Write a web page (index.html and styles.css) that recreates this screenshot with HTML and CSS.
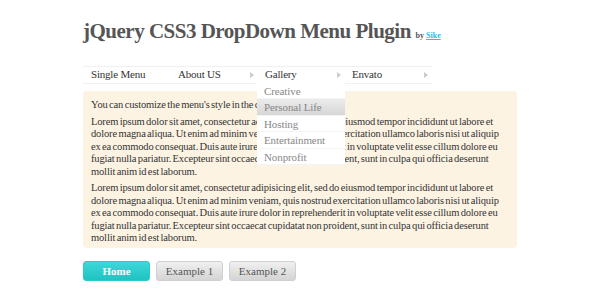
FILE: index.html
```html
<!DOCTYPE html>
<html lang="en">
<head>
  <meta charset="UTF-8" />
  <title>jQuery CSS3 DropDown Menu Plugin</title>
  <link rel="stylesheet" href="styles.css">
</head>
<body>
  <div class="container">
    <h1 class="title">jQuery CSS3 DropDown Menu Plugin <small>by <a href="#">Sike</a></small></h1>

    <ul class="menu">
      <li class="menu-item"><a href="#">Single Menu</a></li>
      <li class="menu-item has-sub"><a href="#">About US</a></li>
      <li class="menu-item has-sub open">
        <a href="#">Gallery</a>
        <ul class="submenu">
          <li><a href="#">Creative</a></li>
          <li class="hover"><a href="#">Personal Life</a></li>
          <li><a href="#">Hosting</a></li>
          <li><a href="#">Entertainment</a></li>
          <li><a href="#">Nonprofit</a></li>
        </ul>
      </li>
      <li class="menu-item has-sub"><a href="#">Envato</a></li>
    </ul>

    <div class="content">
      <p>You can customize the menu's style in the css file.</p>
      <p>Lorem ipsum dolor sit amet, consectetur adipisicing elit, sed do eiusmod tempor incididunt ut labore et dolore magna aliqua. Ut enim ad minim veniam, quis nostrud exercitation ullamco laboris nisi ut aliquip ex ea commodo consequat. Duis aute irure dolor in reprehenderit in voluptate velit esse cillum dolore eu fugiat nulla pariatur. Excepteur sint occaecat cupidatat non proident, sunt in culpa qui officia deserunt mollit anim id est laborum.</p>
      <p>Lorem ipsum dolor sit amet, consectetur adipisicing elit, sed do eiusmod tempor incididunt ut labore et dolore magna aliqua. Ut enim ad minim veniam, quis nostrud exercitation ullamco laboris nisi ut aliquip ex ea commodo consequat. Duis aute irure dolor in reprehenderit in voluptate velit esse cillum dolore eu fugiat nulla pariatur. Excepteur sint occaecat cupidatat non proident, sunt in culpa qui officia deserunt mollit anim id est laborum.</p>
    </div>

    <div class="buttons">
      <a href="#" class="btn btn-active">Home</a>
      <a href="#" class="btn">Example 1</a>
      <a href="#" class="btn">Example 2</a>
    </div>
  </div>
</body>
</html>
```

FILE: styles.css
```css
* {
  box-sizing: border-box;
  margin: 0;
  padding: 0;
}

body {
  font-family: 'Liberation Serif', 'Times New Roman', serif;
  background: #fff;
  color: #333;
}

.container {
  padding: 17px 0 0 83px;
  width: 517px;
}

.title {
  font-size: 21px;
  letter-spacing: -0.5px;
  line-height: 28px;
  color: #555;
  font-weight: bold;
}

.title small {
  font-size: 8px;
  letter-spacing: 0;
  color: #555;
}

.title small a {
  color: #3ab8e0;
}

/* menu bar */
.menu {
  list-style: none;
  display: flex;
  margin-top: 16px;
  border-top: 1px solid #f0f0f0;
  border-bottom: 1px solid #f0f0f0;
  width: 350px;
  position: relative;
  z-index: 2;
}

.menu-item {
  position: relative;
  width: 87px;
  height: 16px;
}

.menu-item > a {
  display: block;
  padding-left: 8px;
  font-size: 11px;
  letter-spacing: -0.2px;
  line-height: 15px;
  color: #333;
  text-decoration: none;
}

.has-sub::after {
  content: '';
  position: absolute;
  right: 3px;
  top: 5px;
  border-left: 4px solid #ccc;
  border-top: 3px solid transparent;
  border-bottom: 3px solid transparent;
}

.submenu {
  list-style: none;
  position: absolute;
  top: 16px;
  left: 0;
  width: 88px;
  background: #fff;
}

.submenu li {
  height: 16.4px;
  border-bottom: 1px solid #f4f4f4;
}

.submenu li a {
  display: block;
  padding-left: 7px;
  font-size: 11px;
  letter-spacing: -0.1px;
  line-height: 16px;
  color: #888;
  text-decoration: none;
}

.submenu li.hover {
  background: linear-gradient(#ececec, #d6d6d6);
}

/* content box */
.content {
  margin-top: 7px;
  background: #fdf3e3;
  border-radius: 4px;
  padding: 8px 8px 4px;
  font-size: 10.5px;
  letter-spacing: -0.15px;
  word-spacing: -1px;
  line-height: 12.4px;
  color: #333;
}

.content p + p {
  margin-top: 4.5px;
}

/* buttons */
.buttons {
  display: flex;
  gap: 6px;
  margin-top: 13px;
}

.btn {
  width: 67px;
  height: 20px;
  border-radius: 3px;
  text-align: center;
  font-size: 11px;
  line-height: 19px;
  text-decoration: none;
  color: #555;
  background: linear-gradient(#f0f0f0, #d4d4d4);
  border: 1px solid #d0d0d0;
}

.btn-active {
  color: #fff;
  font-weight: bold;
  background: linear-gradient(#3ed8d8, #20c2c2);
  border-color: #2ccaca;
}
```
